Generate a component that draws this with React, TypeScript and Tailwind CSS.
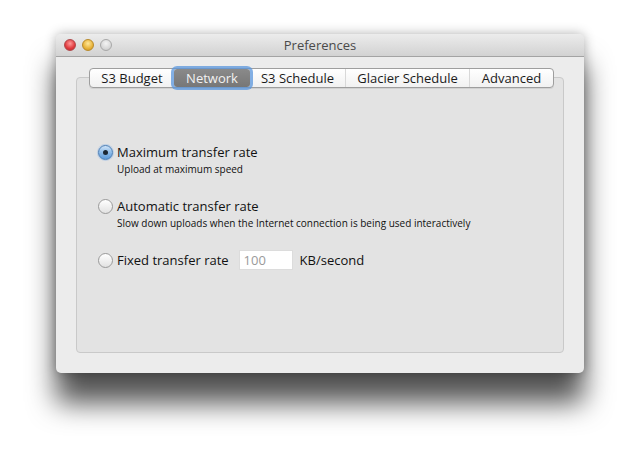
import { useState } from 'react';

const TABS = ['S3 Budget', 'Network', 'S3 Schedule', 'Glacier Schedule', 'Advanced'];
const TAB_WIDTHS = ['w-[84px]', 'w-[76px]', 'w-[95px]', 'w-[124px]', 'w-[84px]'];

const font = { fontFamily: '"Lucida Grande", "Open Sans", "DejaVu Sans", sans-serif' };

function Radio({ on, onClick }: { on: boolean; onClick: () => void }) {
  return (
    <button
      onClick={onClick}
      className={`w-[15px] h-[15px] rounded-full shrink-0 flex items-center justify-center border ${
        on
          ? 'border-[#4a7fb8] bg-gradient-to-b from-[#cfe3f7] via-[#8dbbe8] to-[#5c9ad8] shadow-[0_0_0_1px_rgba(120,170,230,0.35)]'
          : 'border-[#9a9a9a] bg-gradient-to-b from-[#ffffff] to-[#e2e2e2]'
      }`}
    >
      {on && <span className="w-[5px] h-[5px] rounded-full bg-[#1b2733]" />}
    </button>
  );
}

export default function App() {
  const [mode, setMode] = useState(0);
  const [tab, setTab] = useState(1);

  return (
    <div className="w-[640px] h-[451px] bg-white pt-[34px] pl-[56px]" style={font}>
      <div className="w-[528px] h-[339px] rounded-[5px] bg-[#ececec] flex flex-col shadow-[0_30px_28px_rgba(0,0,0,0.68),0_0_12px_rgba(0,0,0,0.3)]">
        {/* title bar */}
        <div className="h-[23px] relative flex items-center justify-center rounded-t-[5px] bg-gradient-to-b from-[#ececec] to-[#d2d2d2] border-b border-[#a3a3a3]">
          <div className="absolute left-[8px] top-[5px] flex gap-[6px]">
            <span className="w-[12px] h-[12px] rounded-full border border-[#b0474a] bg-[radial-gradient(circle_at_50%_35%,#ff9a9a,#e0393d_60%,#b52a2e)]" />
            <span className="w-[12px] h-[12px] rounded-full border border-[#b98a2a] bg-[radial-gradient(circle_at_50%_35%,#ffe79a,#e8b33a_60%,#c38d22)]" />
            <span className="w-[12px] h-[12px] rounded-full border border-[#a8a8a8] bg-[radial-gradient(circle_at_50%_35%,#f4f4f4,#d8d8d8_60%,#c4c4c4)]" />
          </div>
          <span className="text-[13px] text-[#4a4a4a] leading-none">Preferences</span>
        </div>

        {/* body */}
        <div className="flex-1 flex flex-col px-[20px] pt-[11px] pb-[20px]">
          <div className="relative z-10 flex self-start ml-[13px] h-[20px] rounded-[4px] border border-[#9e9e9e] bg-gradient-to-b from-[#ffffff] to-[#f1f1f1] shadow-[0_1px_0_rgba(0,0,0,0.08)]">
            {TABS.map((t, i) => (
              <button
                key={t}
                onClick={() => setTab(i)}
                className={`${TAB_WIDTHS[i]} h-full flex items-center justify-center text-[13px] leading-none ${
                  i === tab
                    ? 'bg-gradient-to-b from-[#8a8a8a] to-[#777777] text-[#f2f2f2] rounded-[3px] shadow-[0_0_0_3px_rgba(90,150,220,0.75)]'
                    : 'text-[#1a1a1a]'
                } ${i > 0 && i !== tab && i - 1 !== tab ? 'border-l border-[#d8d8d8]' : ''}`}
              >
                {t}
              </button>
            ))}
          </div>

          <div className="-mt-[11px] flex-1 rounded-[4px] border border-[#c9c9c9] bg-[#e3e3e3] pl-[21px] pt-[66px] flex flex-col text-[#111]">
            <div className="flex items-center gap-[4px] h-[16px]">
              <Radio on={mode === 0} onClick={() => setMode(0)} />
              <span className="text-[13px] leading-none">Maximum transfer rate</span>
            </div>
            <div className="pl-[19px] mt-[3px] text-[10px] leading-[12px]">Upload at maximum speed</div>

            <div className="flex items-center gap-[4px] h-[16px] mt-[23px]">
              <Radio on={mode === 1} onClick={() => setMode(1)} />
              <span className="text-[13px] leading-none">Automatic transfer rate</span>
            </div>
            <div className="pl-[19px] mt-[3px] text-[10px] leading-[12px]">
              Slow down uploads when the Internet connection is being used interactively
            </div>

            <div className="flex items-center gap-[4px] mt-[21px] h-[20px]">
              <Radio on={mode === 2} onClick={() => setMode(2)} />
              <span className="text-[13px] leading-none">Fixed transfer rate</span>
              <input
                defaultValue="100"
                className="ml-[6px] w-[54px] h-[20px] bg-white border border-[#dcdcdc] px-[4px] text-[13px] text-[#9a9a9a] outline-none"
                style={font}
              />
              <span className="ml-[3px] text-[13px] leading-none">KB/second</span>
            </div>
          </div>
        </div>
      </div>
    </div>
  );
}
